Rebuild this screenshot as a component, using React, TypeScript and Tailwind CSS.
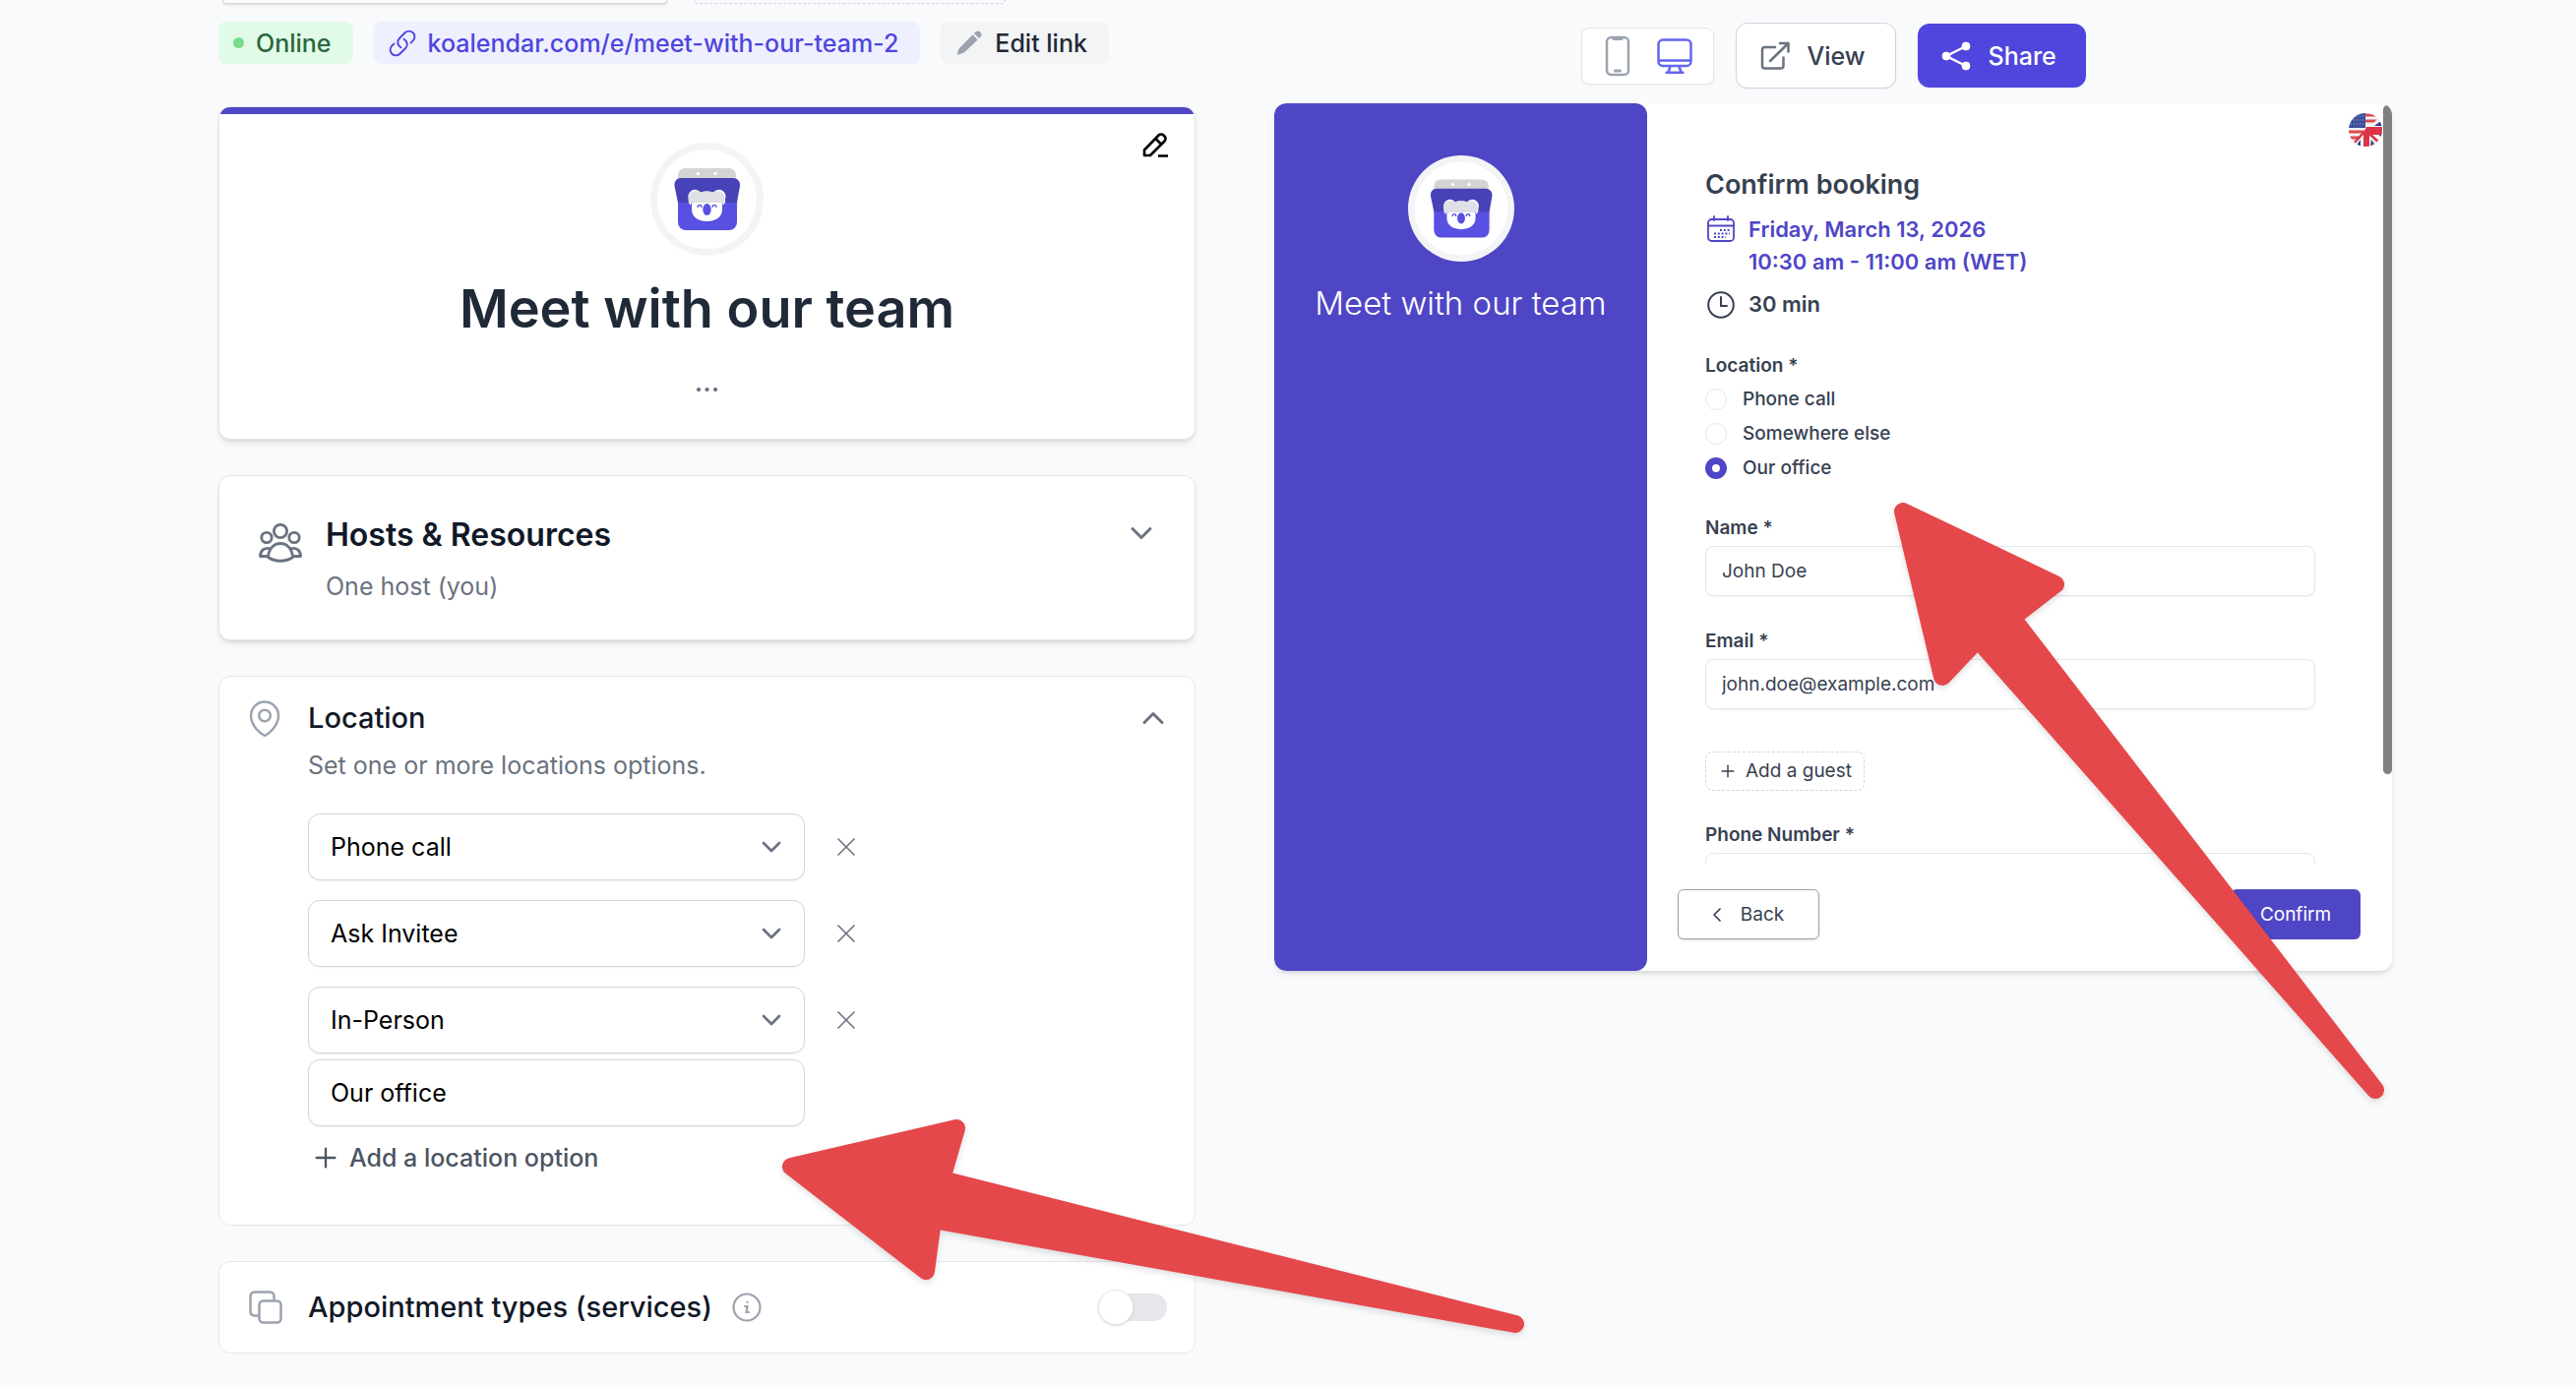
import { useState } from 'react'
import type { ReactNode } from 'react'
import { ChevronDown, ChevronLeft, ChevronUp, Plus, X } from 'lucide-react'

const LOCATION_OPTIONS = ['Phone call', 'Ask Invitee', 'In-Person']

const BOOKING_LOCATIONS = ['Phone call', 'Somewhere else', 'Our office']

function KoalaLogo({ className }: { className: string }) {
  return (
    <svg viewBox="0 0 115 115" className={className} aria-hidden="true">
      <circle cx="57.5" cy="57.5" r="57.5" fill="#f3f4f6" />
      <circle cx="57.5" cy="57.5" r="50.5" fill="#fff" />
      <path d="M35 26h45a7 7 0 0 1 7 7v10H28V33a7 7 0 0 1 7-7z" fill="#d4d4d4" />
      <circle cx="48.5" cy="31.5" r="1.8" fill="#fff" />
      <circle cx="66" cy="31.5" r="1.8" fill="#fff" />
      <path d="M28 58h60v23a8 8 0 0 1-8 8H36a8 8 0 0 1-8-8z" fill="#5850e3" />
      <path d="M31 36h53c4 0 7.500 3 7 8l-3 17H28l-3.500-17c-.5-5 2.500-8 6.500-8z" fill="#4842b8" />
      <path d="M42 61h31v7c0 8-7 12-15.500 12S42 76 42 68z" fill="#fff" />
      <path
        d="M41 63.500c-3-2-2-5-2-6a7 7 0 0 1 12-7c4-1.500 9-1.500 13 0a7 7 0 0 1 12 7c0 1 1 4-2.500 6V61h-32z"
        fill="#fff"
      />
      <path d="M39.500 61c-1-2-1-3-1-5 0-6 7-8.500 12-5.500 4-1.500 9-1.500 13 0 5-3 12-.5 12 5.500 0 2 0 3-1 5z" fill="#dfe0e5" />
      <ellipse cx="57.500" cy="68" rx="4.200" ry="6" fill="#5850e3" />
      <path
        d="M48 66c0-3.500 4-3.500 4 0M63 66c0-3.500 4-3.500 4 0"
        fill="none"
        stroke="#5850e3"
        strokeWidth="1.300"
      />
    </svg>
  )
}

function LanguageFlag() {
  return (
    <svg viewBox="0 0 34 34" className="size-[34px]" aria-hidden="true">
      <defs>
        <clipPath id="flag-round">
          <circle cx="17" cy="17" r="17" />
        </clipPath>
      </defs>
      <g clipPath="url(#flag-round)">
        <path d="M0 0h34v34H0z" fill="#f4f4f6" />
        <path d="M16 2h18M16 8h14M0 19h18M0 25h12" stroke="#dc4a4a" strokeWidth="3" />
        <path d="M0 0h17v15H0z" fill="#3f4f9c" />
        <path
          d="M2 3h14M2 7h14M2 11h14"
          stroke="#aab3dc"
          strokeWidth="1"
          strokeDasharray="1 2"
        />
        <path d="M34 0v34H4L22 14z" fill="#f4f4f6" />
        <path d="M34 7v6h-8zM34 25v-5h-6zM22 34h6l-5-7zM12 27v7H7z" fill="#2f4187" />
        <path d="M34 14H18l-3 7v13h6V22h13z" fill="#dc3545" />
        <path d="M20 20l12 11M15 20L4 32" stroke="#dc3545" strokeWidth="2.500" />
      </g>
    </svg>
  )
}

function LinkIcon() {
  return (
    <svg viewBox="1 1 22 22" className="size-7" fill="none" stroke="currentColor" strokeWidth="1.500" strokeLinecap="round" aria-hidden="true">
      <path d="M13.190 8.688a4.500 4.500 0 0 1 1.242 7.244l-4.500 4.500a4.500 4.500 0 0 1-6.364-6.364l1.757-1.757m13.350-.622 1.757-1.757a4.500 4.500 0 0 0-6.364-6.364l-4.500 4.500a4.500 4.500 0 0 0 1.242 7.244" />
    </svg>
  )
}

function PencilIcon() {
  return (
    <svg viewBox="0 0 24 24" className="size-7" fill="#9ca3af" aria-hidden="true">
      <path d="M21.700 2.300a3 3 0 0 0-4.300 0l-1.200 1.200 4.300 4.300 1.200-1.200a3 3 0 0 0 0-4.300zM19.400 8.900l-4.300-4.300L3.700 16a5 5 0 0 0-1.300 2.200l-.8 2.700c-.2.700.4 1.200 1 1l2.700-.8A5 5 0 0 0 8 19.800z" />
    </svg>
  )
}

function EditIcon() {
  return (
    <svg viewBox="0 0 26 26" className="size-[26px]" fill="none" stroke="#000" strokeWidth="2.600" strokeLinejoin="round" aria-hidden="true">
      <path d="M2 18.500 16.500 3.500a3.500 3.500 0 0 1 5 0l1 1a3.500 3.500 0 0 1 0 5L8 24H2zM13.500 7l5.500 5.500M16 24.500h10" />
    </svg>
  )
}

function HostsIcon() {
  return (
    <svg viewBox="0 0 44 40" className="h-10 w-11 shrink-0" fill="none" stroke="#6b7280" strokeWidth="2.800" strokeLinejoin="round" aria-hidden="true">
      <circle cx="22" cy="8" r="6.600" />
      <circle cx="8" cy="14.500" r="5.200" />
      <circle cx="36" cy="14.500" r="5.200" />
      <path d="M9.500 34.500C10 26 15 20.500 22 20.500s12 5.500 12.500 14c-7 5-18 5-25 0z" />
      <path d="M12 25.800C6 24.500 1.500 27 1.500 33.500H9M32 25.800c6-1.300 10.500 1.200 10.500 7.700H35" />
    </svg>
  )
}

function PinIcon() {
  return (
    <svg viewBox="0 0 32 38" className="h-[38px] w-8" fill="none" stroke="#9ca3af" strokeWidth="2.500" strokeLinejoin="round" aria-hidden="true">
      <path d="M16 36C12 34 2 26 2 15.500a14 14 0 0 1 28 0C30 26 20 34 16 36z" />
      <circle cx="16" cy="15.500" r="5.800" />
    </svg>
  )
}

function CopyIcon() {
  return (
    <svg viewBox="0 0 34 34" className="size-[34px]" fill="none" stroke="#9ca3af" strokeWidth="2.500" aria-hidden="true">
      <rect x="10.500" y="10.500" width="22" height="22" rx="4" />
      <path d="M10 25.500H5.500a4 4 0 0 1-4-4v-16a4 4 0 0 1 4-4h16a4 4 0 0 1 4 4V10" />
    </svg>
  )
}

function InfoIcon() {
  return (
    <svg viewBox="0 0 30 30" className="size-[30px]" fill="none" stroke="#9ca3af" strokeWidth="2.200" strokeLinecap="round" aria-hidden="true">
      <circle cx="15" cy="15" r="13.500" />
      <path d="M13 14h2.500l-1 6h2.500M15.500 9.800v.2" />
    </svg>
  )
}

function PhoneIcon() {
  return (
    <svg viewBox="0 0 26 42" className="h-[42px] w-[26px]" fill="none" stroke="#9ca3af" strokeWidth="2.500" aria-hidden="true">
      <rect x="2" y="2" width="22" height="38" rx="4.500" />
      <path d="M9 3.500h8M10.500 36h5" strokeWidth="3" strokeLinecap="round" />
    </svg>
  )
}

function DesktopIcon() {
  return (
    <svg viewBox="0 0 36 36" className="size-9" fill="none" stroke="#6366f1" strokeWidth="2.500" strokeLinejoin="round" strokeLinecap="round" aria-hidden="true">
      <rect x="1.500" y="1.500" width="33" height="26.500" rx="4.500" />
      <path d="M2 22.500h32M13.500 28.500l-2 6M22.500 28.500l2 6M9.500 34.700h17" />
    </svg>
  )
}

function OpenIcon() {
  return (
    <svg viewBox="0 0 30 30" className="size-[30px]" fill="none" stroke="#6b7280" strokeWidth="2.500" strokeLinejoin="round" strokeLinecap="round" aria-hidden="true">
      <path d="M15 6H4.500a2.500 2.500 0 0 0-2.500 2.500V25a2.500 2.500 0 0 0 2.500 2.500H21a2.500 2.500 0 0 0 2.500-2.500v-8.500M10 20 28.500 2M20 2h8.500v8.500" />
    </svg>
  )
}

function ShareIcon() {
  return (
    <svg viewBox="0 0 30 30" className="size-[30px]" fill="#fff" stroke="#fff" aria-hidden="true">
      <path d="M25 5 5 15l20 10" fill="none" strokeWidth="2.500" />
      <circle cx="25" cy="5" r="4" />
      <circle cx="5" cy="15" r="4" />
      <circle cx="25" cy="25" r="4" />
    </svg>
  )
}

function CalendarIcon() {
  return (
    <svg viewBox="0 0 28 28" className="size-7" fill="none" stroke="currentColor" strokeWidth="1.800" aria-hidden="true">
      <rect x="1" y="4" width="26" height="22" rx="3.500" />
      <path d="M7 1v4M21 1v4M1 10.500h26" strokeLinecap="round" />
      <path d="M13 15h10M7 18.500h16M7 22h12" strokeDasharray="2 1.800" />
    </svg>
  )
}

function ClockIcon() {
  return (
    <svg viewBox="0 0 28 28" className="size-7" fill="none" stroke="currentColor" strokeWidth="2" strokeLinecap="round" aria-hidden="true">
      <circle cx="14" cy="14" r="12.800" />
      <path d="M14 6v9h6" />
    </svg>
  )
}

function Card({ children, className }: { children: ReactNode; className: string }) {
  return <section className={`rounded-xl border border-[#e5e7eb] bg-white ${className}`}>{children}</section>
}

function EventCard() {
  return (
    <Card className="relative overflow-hidden pb-10 shadow-md">
      <div className="h-[7px] bg-[#4f46c6]" />
      <button type="button" aria-label="Edit event" className="absolute top-[25px] right-[27px]">
        <EditIcon />
      </button>
      <div className="flex flex-col items-center pt-[29px]">
        <KoalaLogo className="size-[115px]" />
        <h1 className="mt-[22px] text-[54px] leading-[64px] font-semibold text-[#1f2937]">Meet with our team</h1>
        <p className="mt-6 text-[28px] leading-9 font-medium text-[#6b7280]">...</p>
      </div>
    </Card>
  )
}

function HostsCard() {
  return (
    <Card className="flex items-start gap-6 px-10 pt-10 pb-[38px] shadow-md">
      <div className="pt-2">
        <HostsIcon />
      </div>
      <div className="flex-1">
        <h2 className="text-[32px] leading-10 font-semibold text-[#111827]">Hosts &amp; Resources</h2>
        <p className="mt-4 text-[25px] leading-8 text-[#6b7280]">One host (you)</p>
      </div>
      <button type="button" aria-label="Expand hosts" className="-mr-1 text-[#6b7280]">
        <ChevronDown className="size-9" />
      </button>
    </Card>
  )
}

function LocationCard() {
  const [place, setPlace] = useState('Our office')

  return (
    <Card className="flex items-start gap-7 pt-6 pr-6 pb-[52px] pl-[30px]">
      <PinIcon />
      <div className="flex-1 text-[25px] leading-8">
        <h2 className="text-[29px] leading-9 font-medium text-[#111827]">Location</h2>
        <p className="mt-[14px] text-[#6b7280]">Set one or more locations options.</p>
        <div className="mt-[33px] flex flex-col gap-5">
          {LOCATION_OPTIONS.map((option) => (
            <div key={option} className="flex items-center gap-[26px]">
              <div className="relative w-[505px]">
                <select
                  aria-label="Location option"
                  defaultValue={option}
                  className="h-[68px] w-full appearance-none rounded-xl border border-[#d1d5db] bg-white px-[22px] text-black shadow-xs"
                >
                  {LOCATION_OPTIONS.map((name) => (
                    <option key={name}>{name}</option>
                  ))}
                </select>
                <ChevronDown className="pointer-events-none absolute top-[18px] right-[18px] size-8 text-[#6b7280]" />
              </div>
              <button type="button" aria-label={`Remove ${option}`} className="text-[#6b7280]">
                <X className="size-8" strokeWidth={1.25} />
              </button>
            </div>
          ))}
        </div>
        <input
          aria-label="Address"
          value={place}
          onChange={(e) => setPlace(e.target.value)}
          className="mt-[6px] block h-[68px] w-[505px] rounded-xl border border-[#d1d5db] bg-white px-[22px] text-black shadow-xs"
        />
        <button type="button" className="mt-4 flex items-center gap-2 pl-[2px] font-medium text-[#4b5563]">
          <Plus className="size-8" strokeWidth={1.75} />
          Add a location option
        </button>
      </div>
      <button type="button" aria-label="Collapse location" className="text-[#6b7280]">
        <ChevronUp className="size-9" />
      </button>
    </Card>
  )
}

function AppointmentCard() {
  const [enabled, setEnabled] = useState(false)

  return (
    <Card className="flex items-center py-7 pr-7 pl-[30px]">
      <CopyIcon />
      <h2 className="ml-[26px] text-[29px] leading-9 font-medium text-[#111827]">Appointment types (services)</h2>
      <div className="ml-5">
        <InfoIcon />
      </div>
      <label className="relative ml-auto flex h-9 w-[70px] items-center">
        <input
          type="checkbox"
          aria-label="Enable appointment types"
          checked={enabled}
          onChange={(e) => setEnabled(e.target.checked)}
          className="peer h-7 w-full appearance-none rounded-full bg-[#e5e7eb] checked:bg-[#4f46dd]"
        />
        <span className="pointer-events-none absolute top-0 left-0 size-9 rounded-full border border-[#e5e7eb] bg-white shadow-sm peer-checked:left-9" />
      </label>
    </Card>
  )
}

function Editor() {
  return (
    <div className="w-[993px] shrink-0">
      <div className="flex h-1 gap-7 pl-1">
        <div className="w-[452px] rounded-b-lg border border-t-0 border-[#d1d5db] bg-white shadow-sm" />
        <div className="w-[316px] rounded-b-lg border border-t-0 border-dashed border-[#d1d5db]" />
      </div>
      <div className="mt-[18px] flex gap-[21px] text-[25px] leading-8 font-medium">
        <span className="flex h-[43px] items-center gap-3 rounded-lg bg-[#e1fbe8] pr-[22px] pl-[15px] text-[#2a673a]">
          <span className="size-[11px] rounded-full bg-[#77dc8b]" />
          Online
        </span>
        <a href="#booking-page" className="flex h-[43px] items-center gap-3 rounded-lg bg-[#eef0ff] pr-[22px] pl-[15px] text-[#4f46dd]">
          <LinkIcon />
          koalendar.com/e/meet-with-our-team-2
        </a>
        <button type="button" className="flex h-[43px] items-center gap-3 rounded-lg bg-[#f3f4f6] pr-[22px] pl-[15px] text-[#1f2937]">
          <PencilIcon />
          Edit link
        </button>
      </div>
      <div className="mt-[43px] flex flex-col gap-9">
        <EventCard />
        <HostsCard />
        <LocationCard />
        <AppointmentCard />
      </div>
    </div>
  )
}

function Field({ id, label, value }: { id: string; label: string; value: string }) {
  return (
    <div>
      <label htmlFor={id} className="block leading-6 font-semibold">
        {label}
      </label>
      <input
        id={id}
        defaultValue={value}
        className="mt-[6px] block h-[51px] w-full rounded-lg border border-[#e5e7eb] bg-white px-4 shadow-xs"
      />
    </div>
  )
}

function BookingPreview() {
  return (
    <div className="relative flex h-[882px] overflow-hidden rounded-xl bg-white shadow-md">
      <aside className="flex w-[379px] shrink-0 flex-col items-center rounded-xl bg-[#4f46c6] pt-[53px]">
        <KoalaLogo className="size-[108px]" />
        <p className="mt-5 text-[33px] leading-11 font-light text-white">Meet with our team</p>
      </aside>
      <div className="flex flex-1 flex-col text-[19px] leading-6 text-[#374151]">
        <div className="h-[773px] overflow-hidden pt-[65px] pr-[78px] pl-[59px]">
          <h2 className="text-[27px] leading-9 font-semibold">Confirm booking</h2>
          <div className="mt-[11px] flex gap-[14px] pl-[2px] text-[22px] leading-[33px] font-semibold text-[#4f46c6]">
            <div className="pt-[2px]">
              <CalendarIcon />
            </div>
            <p>
              Friday, March 13, 2026
              <br />
              10:30 am - 11:00 am (WET)
            </p>
          </div>
          <div className="mt-[10px] flex items-center gap-[14px] pl-[2px] text-[22px] leading-[33px] font-semibold">
            <ClockIcon />
            30 min
          </div>
          <fieldset className="mt-[34px]">
            <legend className="mb-1 leading-6 font-semibold">Location *</legend>
            {BOOKING_LOCATIONS.map((name) => (
              <label key={name} className="flex h-[35px] items-center gap-4 font-medium">
                <input
                  type="radio"
                  name="booking-location"
                  defaultChecked={name === 'Our office'}
                  className="size-[22px] appearance-none rounded-full border border-[#e5e7eb] checked:border-[7px] checked:border-[#4f46c6]"
                />
                {name}
              </label>
            ))}
          </fieldset>
          <div className="mt-8 flex flex-col gap-[34px]">
            <Field id="name" label="Name *" value="John Doe" />
            <Field id="email" label="Email *" value="john.doe@example.com" />
          </div>
          <button
            type="button"
            className="mt-[43px] mb-[33px] flex h-10 items-center gap-2 rounded-lg border border-dashed border-[#d1d5db] px-3"
          >
            <Plus className="size-5" strokeWidth={1.75} />
            Add a guest
          </button>
          <Field id="phone" label="Phone Number *" value="" />
        </div>
        <div className="flex justify-between pt-[26px] pr-8 pl-[31px]">
          <button type="button" className="flex h-[51px] w-[144px] items-center justify-center gap-3 rounded-md border border-[#9ca3af] bg-white pr-2 shadow-sm">
            <ChevronLeft className="size-6" strokeWidth={1.75} />
            Back
          </button>
          <button type="button" className="h-[51px] w-[132px] rounded-md bg-[#4f46c6] text-white">
            Confirm
          </button>
        </div>
      </div>
      <button type="button" aria-label="Language" className="absolute top-[10px] right-[10px]">
        <LanguageFlag />
      </button>
      <div className="absolute top-[2px] right-0 h-[680px] w-[9px] rounded-full bg-[#808080]" />
    </div>
  )
}

function Preview() {
  return (
    <div className="min-w-0 flex-1">
      <div className="flex items-center justify-center gap-[22px] pt-[23px] text-[25px] leading-8 font-medium">
        <div className="flex h-[58px] w-[135px] items-center justify-between rounded-lg border border-[#e5e7eb] bg-white pr-[21px] pl-[23px] shadow-xs">
          <button type="button" aria-label="Mobile preview">
            <PhoneIcon />
          </button>
          <button type="button" aria-label="Desktop preview">
            <DesktopIcon />
          </button>
        </div>
        <button type="button" className="flex h-[67px] w-[163px] items-center gap-[18px] rounded-xl border border-[#d1d5db] bg-white pl-6 text-[#374151] shadow-xs">
          <OpenIcon />
          View
        </button>
        <button type="button" className="flex h-[65px] w-[171px] items-center gap-[18px] rounded-xl bg-[#4f46dd] pl-6 text-white shadow-xs">
          <ShareIcon />
          Share
        </button>
      </div>
      <div className="mt-[15px]">
        <BookingPreview />
      </div>
    </div>
  )
}

function Arrows() {
  return (
    <svg
      viewBox="0 0 2618 1408"
      className="pointer-events-none absolute top-0 left-0 w-full drop-shadow-md"
      fill="#e5484a"
      stroke="#e5484a"
      strokeWidth="18"
      strokeLinejoin="round"
      aria-hidden="true"
    >
      <path d="M804 1186 972 1147 957 1199 1540 1346 948 1240 941 1292z" />
      <path d="M1934 520 2089 594 2045 628 2414 1108 2010 650 1974 688z" />
    </svg>
  )
}

export default function App() {
  return (
    <main className="relative min-h-screen overflow-hidden bg-[#f9fafc] font-['Inter',sans-serif]">
      <div className="flex gap-20 pr-[187px] pl-[222px]">
        <Editor />
        <Preview />
      </div>
      <Arrows />
    </main>
  )
}
